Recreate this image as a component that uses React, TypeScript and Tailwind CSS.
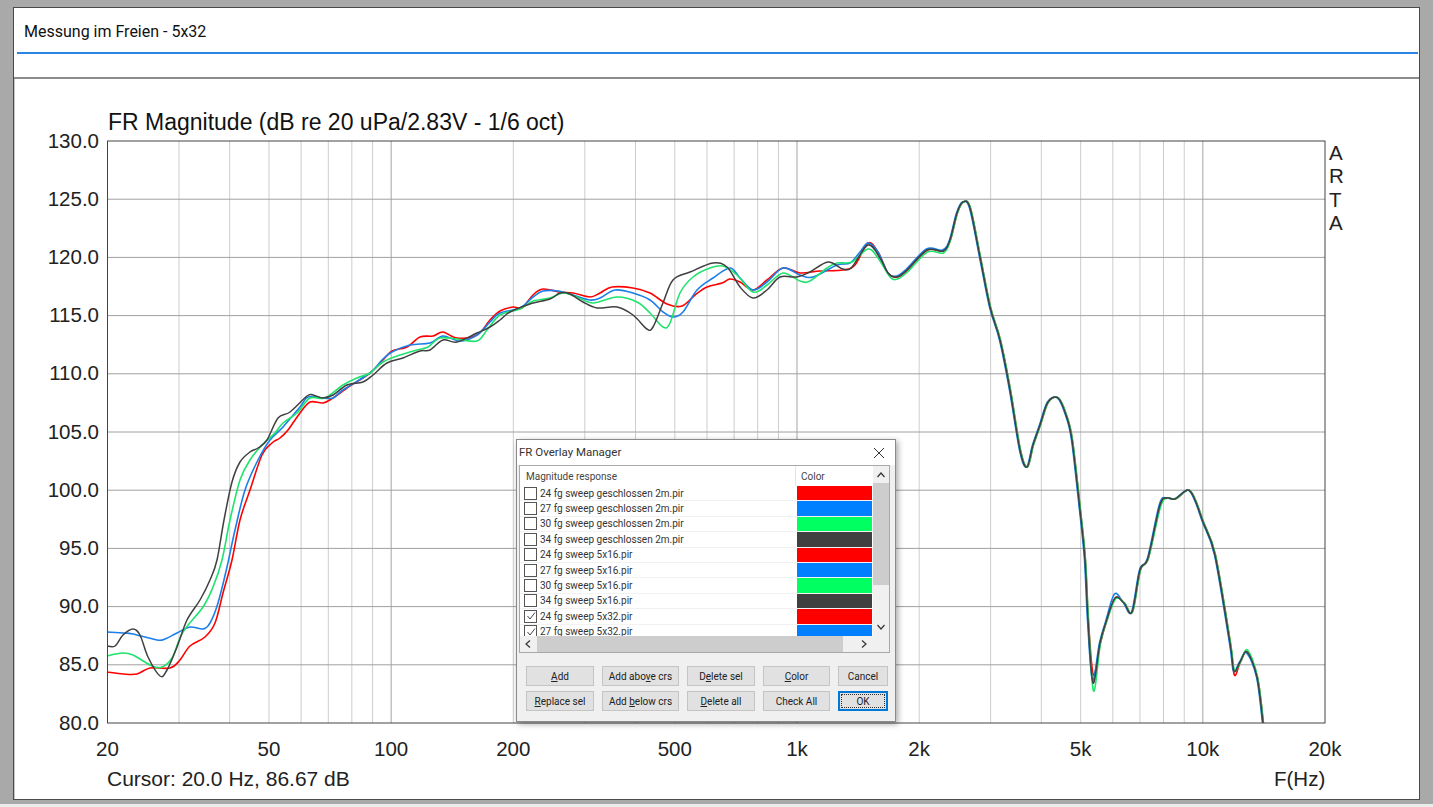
const F = { fontFamily: '"Liberation Sans", Arial, sans-serif' }

type Pt = [number, number]

// plot frame in page coordinates
const L = 107.5
const R = 1325
const T = 141
const B = 723
const fx = (f: number) => L + ((R - L) * Math.log10(f / 20)) / 3
const dbY = (db: number) => T + ((B - T) * (130 - db)) / 50

const MINOR = [30, 40, 50, 60, 70, 80, 90, 200, 300, 400, 500, 600, 700, 800, 900, 2000, 3000, 4000, 5000, 6000, 7000, 8000, 9000]
const MAJOR = [100, 1000, 10000]
const XLABELS: [number, string][] = [
  [20, '20'], [50, '50'], [100, '100'], [200, '200'], [500, '500'],
  [1000, '1k'], [2000, '2k'], [5000, '5k'], [10000, '10k'], [20000, '20k'],
]
const YLABELS = [130, 125, 120, 115, 110, 105, 100, 95, 90, 85, 80]

// the part where all four measurements sit on top of each other
const tail = (dx: number, dy: number, dip: number, bump: number, dip2: number): Pt[] =>
  ([
    [897, 277 + dy], [907, 270 + dy], [927, 250 + dy], [943, 251 + dy], [950, 240], [957, 213], [963, 202],
    [970, 208], [980, 257], [990, 307], [1000, 340], [1010, 390], [1020, 450], [1027, 467], [1033, 445],
    [1040, 425], [1048, 402], [1058, 398], [1066, 415], [1072, 440], [1080, 510], [1085, 560], [1088, 620],
    [1093, dip], [1100, 643], [1106, 622], [1115, bump], [1124, 603], [1132, 612], [1140, 570], [1148, 558],
    [1160, 505 + dy], [1167, 498], [1175, 499], [1188, 490], [1195, 500], [1203, 522], [1215, 555],
    [1230, 643], [1234, dip2], [1240, 662], [1247, 652 - dy], [1257, 677], [1263, 723],
  ] as Pt[]).map(([x, y]) => [x + dx, y] as Pt)

const CURVES: { color: string; width: number; pts: Pt[] }[] = [
  {
    color: '#ff0000',
    width: 1.6,
    pts: [
      [107, 672], [123, 674], [137, 674], [150, 668], [170, 668], [180, 660], [190, 646], [205, 637], [215, 623],
      [223, 593], [232, 560], [240, 520], [250, 490], [262, 455], [272, 443], [280, 438], [288, 430], [300, 413],
      [310, 402], [323, 403], [333, 398], [347, 388], [370, 373], [383, 360], [392, 351], [407, 347], [420, 337],
      [433, 336], [443, 332], [457, 338], [477, 335], [490, 320], [500, 311], [513, 307], [522, 308], [533, 295],
      [543, 289], [560, 292], [573, 293], [590, 297], [600, 293], [612, 287], [633, 288], [650, 293], [667, 304],
      [682, 306], [695, 295], [707, 287], [722, 283], [730, 279], [740, 282], [753, 290], [767, 280], [783, 268],
      [800, 273], [820, 271], [843, 270], [855, 265], [868, 243], [878, 252], [888, 273],
      ...tail(0.4, 0, 675, 598, 675),
    ],
  },
  {
    color: '#1a7fe8',
    width: 1.6,
    pts: [
      [107, 632], [123, 633], [133, 634], [157, 640], [165, 639], [177, 633], [190, 627], [203, 629], [210, 623],
      [218, 603], [227, 567], [235, 530], [245, 490], [258, 460], [270, 440], [283, 427], [300, 407], [308, 397],
      [323, 398], [333, 398], [343, 390], [370, 373], [382, 360], [392, 352], [410, 345], [430, 343], [443, 336],
      [460, 341], [477, 335], [490, 322], [500, 313], [520, 308], [533, 297], [543, 291], [558, 291], [573, 295],
      [590, 300], [600, 298], [615, 290], [633, 293], [650, 300], [663, 312], [673, 317], [683, 312], [697, 290],
      [713, 278], [730, 268], [740, 278], [753, 290], [767, 282], [783, 268], [800, 275], [813, 277], [837, 265],
      [850, 263], [860, 252], [868, 243], [878, 252], [888, 273],
      ...tail(-0.5, -1, 680, 594, 671),
    ],
  },
  {
    color: '#1fe36d',
    width: 1.6,
    pts: [
      [107, 656], [122, 653], [133, 655], [152, 666], [162, 667], [172, 658], [183, 632], [203, 607], [213, 587],
      [222, 560], [230, 520], [240, 480], [250, 460], [262, 445], [275, 433], [283, 423], [297, 413], [310, 398],
      [325, 398], [343, 385], [357, 378], [370, 373], [383, 362], [400, 355], [417, 350], [428, 347], [440, 338],
      [457, 339], [477, 341], [487, 330], [500, 315], [520, 309], [533, 301], [550, 298], [563, 293], [577, 297],
      [593, 303], [617, 297], [637, 302], [650, 313], [663, 327], [670, 323], [680, 293], [693, 277], [710, 268],
      [723, 266], [737, 275], [753, 292], [767, 285], [783, 273], [800, 281], [810, 281], [827, 268], [837, 263],
      [852, 262], [868, 249], [878, 258], [890, 277],
      ...tail(0.5, 2, 691, 599, 670),
    ],
  },
  {
    color: '#404040',
    width: 1.5,
    pts: [
      [107, 646], [115, 646], [123, 635], [133, 629], [140, 635], [148, 657], [160, 676], [167, 670], [177, 647],
      [187, 620], [200, 600], [210, 580], [217, 560], [224, 520], [232, 482], [240, 462], [250, 452], [258, 448],
      [267, 440], [278, 418], [290, 412], [307, 396], [313, 395], [323, 398], [333, 395], [347, 385], [363, 382],
      [373, 375], [387, 363], [403, 358], [420, 351], [430, 350], [443, 340], [457, 342], [477, 333], [490, 327],
      [500, 320], [510, 312], [530, 304], [550, 299], [560, 293], [570, 294], [583, 302], [597, 308], [617, 307],
      [633, 315], [647, 329], [653, 327], [663, 303], [673, 280], [690, 272], [713, 263], [727, 267], [740, 287],
      [753, 298], [767, 290], [780, 277], [797, 277], [810, 272], [828, 262], [843, 269], [852, 267], [868, 245],
      [880, 258], [888, 273],
      ...tail(0, 0, 683, 598, 671),
    ],
  },
]

// Catmull-Rom through the traced points, written as cubic beziers
function smooth(pts: Pt[]) {
  let d = `M${pts[0][0]} ${pts[0][1]}`
  for (let i = 0; i < pts.length - 1; i++) {
    const p0 = pts[Math.max(i - 1, 0)]
    const p1 = pts[i]
    const p2 = pts[i + 1]
    const p3 = pts[Math.min(i + 2, pts.length - 1)]
    const c1x = p1[0] + (p2[0] - p0[0]) / 6
    const c1y = p1[1] + (p2[1] - p0[1]) / 6
    const c2x = p2[0] - (p3[0] - p1[0]) / 6
    const c2y = p2[1] - (p3[1] - p1[1]) / 6
    d += `C${c1x.toFixed(1)} ${c1y.toFixed(1)} ${c2x.toFixed(1)} ${c2y.toFixed(1)} ${p2[0]} ${p2[1]}`
  }
  return d
}

function Chart() {
  return (
    <svg viewBox="15 79 1403 720" className="block w-[1403px] h-[720px]" style={F}>
      {MINOR.map((f) => (
        <line key={f} x1={fx(f)} x2={fx(f)} y1={T} y2={B} stroke="#cdcdcd" strokeWidth={1} />
      ))}
      {MAJOR.map((f) => (
        <line key={f} x1={fx(f)} x2={fx(f)} y1={T} y2={B} stroke="#a4a4a4" strokeWidth={1} />
      ))}
      {YLABELS.slice(1, -1).map((db) => (
        <line key={db} x1={L} x2={R} y1={dbY(db)} y2={dbY(db)} stroke="#a0a0a0" strokeWidth={1} />
      ))}
      {CURVES.map((c) => (
        <path key={c.color} d={smooth(c.pts)} fill="none" stroke={c.color} strokeWidth={c.width} strokeLinejoin="round" />
      ))}
      <rect x={L} y={T} width={R - L} height={B - T} fill="none" stroke="#444444" strokeWidth={1} />

      <text x={108} y={130} fontSize={23} fill="#111">FR Magnitude (dB re 20 uPa/2.83V - 1/6 oct)</text>
      {YLABELS.map((db) => (
        <text key={db} x={99} y={dbY(db) + 6.5} fontSize={20.5} fill="#222" textAnchor="end">{db.toFixed(1)}</text>
      ))}
      {XLABELS.map(([f, label]) => (
        <text key={label} x={fx(f)} y={756} fontSize={20.5} fill="#222" textAnchor="middle">{label}</text>
      ))}
      <text x={107} y={786} fontSize={21} fill="#222">Cursor: 20.0 Hz, 86.67 dB</text>
      <text x={1274} y={786} fontSize={20.5} fill="#222">F(Hz)</text>
      {['A', 'R', 'T', 'A'].map((ch, i) => (
        <text key={i} x={1329} y={160 + i * 23.3} fontSize={20.5} fill="#222">{ch}</text>
      ))}
    </svg>
  )
}

const ROWS = [
  { name: '24 fg sweep geschlossen 2m.pir', color: 'bg-[#ff0000]' },
  { name: '27 fg sweep geschlossen 2m.pir', color: 'bg-[#0080ff]' },
  { name: '30 fg sweep geschlossen 2m.pir', color: 'bg-[#00ff60]' },
  { name: '34 fg sweep geschlossen 2m.pir', color: 'bg-[#404040]' },
  { name: '24 fg sweep 5x16.pir', color: 'bg-[#ff0000]' },
  { name: '27 fg sweep 5x16.pir', color: 'bg-[#0080ff]' },
  { name: '30 fg sweep 5x16.pir', color: 'bg-[#00ff60]' },
  { name: '34 fg sweep 5x16.pir', color: 'bg-[#404040]' },
  { name: '24 fg sweep 5x32.pir', color: 'bg-[#ff0000]', checked: true },
  { name: '27 fg sweep 5x32.pir', color: 'bg-[#0080ff]', checked: true },
]

function Btn({ children, primary }: { children: React.ReactNode; primary?: boolean }) {
  return (
    <div
      className={`h-5 flex items-center justify-center text-[10px] text-[#222] bg-[#e1e1e1] border ${
        primary ? 'border-[#0078d7] border-2 outline-1 -outline-offset-4 outline-dotted outline-[#333]' : 'border-[#c4c4c4]'
      }`}
    >
      <span>{children}</span>
    </div>
  )
}

function Overlay() {
  return (
    <div
      className="absolute left-[516px] top-[439px] w-[380px] h-[283px] bg-[#f0f0f0] border border-[#8a8a8a] shadow-[2px_2px_6px_rgba(0,0,0,0.35)] flex flex-col"
      style={{ fontFamily: 'Roboto, Tahoma, sans-serif' }}
    >
      <div className="h-[25px] shrink-0 bg-white flex items-center justify-between pl-[2px] pr-[10px] text-[11.5px] text-[#333]">
        <span>FR Overlay Manager</span>
        <svg width="12" height="12" viewBox="0 0 12 12" fill="none" stroke="#333" strokeWidth="1">
          <path d="M1 1l10 10M11 1L1 11" />
        </svg>
      </div>

      <div className="ml-[2px] w-[371px] h-[188px] bg-white border border-[#a8a8a8] flex flex-col overflow-hidden shrink-0">
        <div className="flex h-[170px] shrink-0">
          <div className="w-[353px] flex flex-col overflow-hidden">
            <div className="flex h-[20px] shrink-0 text-[10px] text-[#444]">
              <div className="w-[276px] pl-[6px] flex items-center border-r border-[#e4e4e4]">Magnitude response</div>
              <div className="pl-[5px] flex items-center">Color</div>
            </div>
            {ROWS.map((row) => (
              <div key={row.name} className="flex h-[15.4px] shrink-0 border-b border-[#f2f2f2]">
                <div className="w-[277px] flex items-center pl-[4px] gap-[3px] text-[10px] text-[#333] whitespace-nowrap">
                  <span className="w-[13px] h-[13px] shrink-0 border border-[#555] flex items-center justify-center">
                    {row.checked && (
                      <svg width="10" height="10" viewBox="0 0 10 10" fill="none" stroke="#444" strokeWidth="1">
                        <path d="M1.5 5l2.5 3L9 1.5" />
                      </svg>
                    )}
                  </span>
                  {row.name}
                </div>
                <div className={`w-[75px] ${row.color}`} />
              </div>
            ))}
          </div>
          <div className="w-[16px] bg-[#f0f0f0] flex flex-col items-center text-[#333]">
            <svg className="h-[17px] shrink-0" width="10" viewBox="0 0 10 17" fill="none" stroke="#333" strokeWidth="1.2">
              <path d="M1.5 11l3.5-4 3.5 4" />
            </svg>
            <div className="w-full h-[102px] bg-[#cdcdcd]" />
            <svg className="h-[17px] mt-auto shrink-0" width="10" viewBox="0 0 10 17" fill="none" stroke="#333" strokeWidth="1.2">
              <path d="M1.5 6l3.5 4 3.5-4" />
            </svg>
          </div>
        </div>
        <div className="flex items-center h-[16px] shrink-0 bg-[#f0f0f0]">
          <svg className="w-[17px] shrink-0" height="10" viewBox="0 0 17 10" fill="none" stroke="#333" strokeWidth="1.2">
            <path d="M10 1.5L6 5l4 3.5" />
          </svg>
          <div className="w-[306px] h-full bg-[#cdcdcd]" />
          <svg className="w-[45px] shrink-0" height="10" viewBox="0 0 45 10" fill="none" stroke="#333" strokeWidth="1.2">
            <path d="M19 1.5L23 5l-4 3.5" />
          </svg>
        </div>
      </div>

      <div className="grid grid-cols-[68px_77px_68px_67px_50px] gap-x-2 gap-y-[5px] ml-[9px] mt-[13px] w-[362px]">
        <Btn><u>A</u>dd</Btn>
        <Btn>Add abo<u>v</u>e crs</Btn>
        <Btn>D<u>e</u>lete sel</Btn>
        <Btn><u>C</u>olor</Btn>
        <Btn>Cancel</Btn>
        <Btn><u>R</u>eplace sel</Btn>
        <Btn>Add <u>b</u>elow crs</Btn>
        <Btn><u>D</u>elete all</Btn>
        <Btn>Check All</Btn>
        <Btn primary>OK</Btn>
      </div>
    </div>
  )
}

export default function App() {
  return (
    <div className="relative w-[1433px] h-[807px] overflow-hidden bg-[#a9a9a9] pt-[7px] pl-[13px]" style={{ fontFamily: 'Roboto, sans-serif' }}>
      <div className="w-[1407px] h-[793px] bg-white border border-[#4a4a4a] flex flex-col">
        <div className="h-[46px] shrink-0 pl-[3px] pr-px flex flex-col">
          <div className="h-[44px] flex items-center pl-[7px] pt-[4px] text-[16px] text-[#111]">Messung im Freien - 5x32</div>
          <div className="h-[2px] bg-[#2b85e4]" />
        </div>
        <div className="h-[25px] shrink-0 border-b-2 border-[#8c8c8c]" />
        <div className="flex-1 border-l border-[#c8c8c8]">
          <Chart />
        </div>
      </div>
      <div className="absolute left-0 right-0 bottom-0 h-[3px] bg-[#ececec]" />
      <Overlay />
    </div>
  )
}
